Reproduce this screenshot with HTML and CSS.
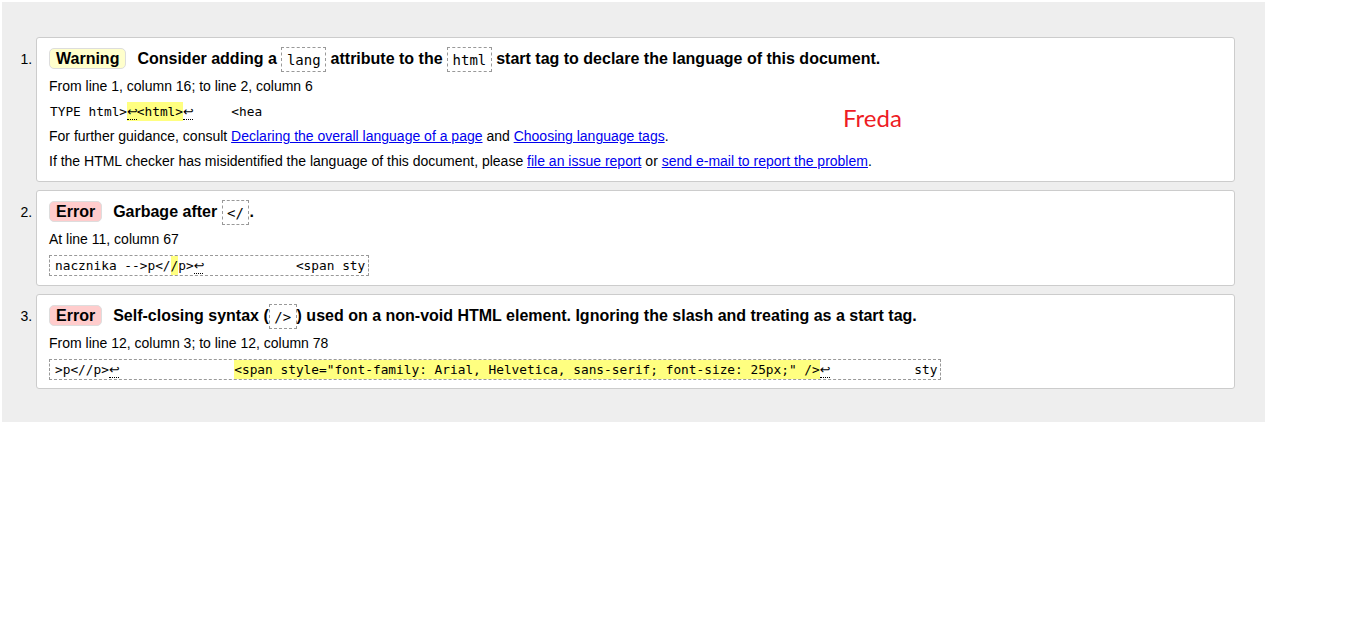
FILE: index.html
```html
<!DOCTYPE html>
<html lang="en">
<head>
<meta charset="utf-8">
<title>Validator messages</title>
<link rel="stylesheet" href="styles.css">
</head>
<body>
<div class="panel">
  <ol class="messages">
    <li class="card">
      <p class="title"><span class="badge badge-warning">Warning</span>Consider adding a <code>lang</code> attribute to the <code>html</code> start tag to declare the language of this document.</p>
      <p class="line">From line 1, column 16; to line 2, column 6</p>
      <p class="line extract"><span class="plain">TYPE html&gt;<mark><span class="lf">↩</span>&lt;html&gt;</mark><span class="lf">↩</span>     &lt;hea</span></p>
      <p class="line">For further guidance, consult <a href="#">Declaring the overall language of a page</a> and <a href="#">Choosing language tags</a>.</p>
      <p class="line">If the HTML checker has misidentified the language of this document, please <a href="#">file an issue report</a> or <a href="#">send e-mail to report the problem</a>.</p>
    </li>
    <li class="card">
      <p class="title"><span class="badge badge-error">Error</span>Garbage after <code>&lt;/</code>.</p>
      <p class="line">At line 11, column 67</p>
      <p class="line extract extract-boxed"><span class="box">nacznika --&gt;p&lt;/<mark>/</mark>p&gt;<span class="lf">↩</span>            &lt;span sty</span></p>
    </li>
    <li class="card">
      <p class="title"><span class="badge badge-error">Error</span>Self-closing syntax (<code>/&gt;</code>) used on a non-void HTML element. Ignoring the slash and treating as a start tag.</p>
      <p class="line">From line 12, column 3; to line 12, column 78</p>
      <p class="line extract extract-boxed"><span class="box">&gt;p&lt;//p&gt;<span class="lf">↩</span>               <mark>&lt;span style="font-family: Arial, Helvetica, sans-serif; font-size: 25px;" /&gt;</mark><span class="lf">↩</span>           sty</span></p>
    </li>
  </ol>
</div>
<div class="freda">Freda</div>
</body>
</html>
```

FILE: styles.css
```css
html, body {
  margin: 0;
  padding: 0;
  background: #fff;
}

body {
  font-family: "Liberation Sans", Arial, sans-serif;
  font-size: 14px;
  color: #000;
  position: relative;
}

.panel {
  margin: 2px 0 0 2px;
  width: 1263px;
  box-sizing: border-box;
  background: #eeeeee;
  padding: 35px 30px 33px 34px;
}

.messages {
  margin: 0;
  padding: 0;
  list-style: decimal outside;
}

.card {
  background: #fff;
  border: 1px solid #cccccc;
  border-radius: 3px;
  padding: 10px 12px 7px 12px;
  margin-bottom: 8px;
}

.card:last-child {
  margin-bottom: 0;
  padding-bottom: 6px;
}

.card::marker {
  font-family: "Liberation Sans", Arial, sans-serif;
  font-size: 14px;
  color: #000;
}

.title {
  margin: 0 0 5px 0;
  font-size: 16px;
  font-weight: bold;
  line-height: 21px;
}

.badge {
  display: inline-block;
  line-height: 19px;
  padding: 0 6px;
  border: 1px solid #dddddd;
  border-radius: 5px;
  margin-right: 11px;
}

.badge-warning {
  background: #ffffcc;
}

.badge-error {
  background: #ffcccc;
}

.title code {
  font-family: "DejaVu Sans Mono", monospace;
  font-size: 14px;
  font-weight: normal;
  line-height: 16px;
  border: 1px dashed #999999;
  padding: 3.5px 4.5px;
}

.line {
  margin: 0;
  line-height: 25px;
}

.line a {
  color: #0000ee;
}

.extract {
  font-family: "DejaVu Sans Mono", monospace;
  font-size: 12.8px;
  white-space: pre;
}

.extract-boxed {
  line-height: 26px;
}

.plain {
  padding-left: 1px;
}

.box {
  display: inline-block;
  line-height: 19px;
  border: 1px dashed #999999;
  padding: 0 3px 0 5px;
  vertical-align: middle;
}

mark {
  background: #ffff80;
  color: #000;
  padding: 2px 0;
}

.lf {
  font-family: "DejaVu Sans", sans-serif;
  border-bottom: 1px dotted #000;
  letter-spacing: -1px;
}

.freda {
  position: absolute;
  left: 843px;
  top: 106px;
  font-family: Lato, "Open Sans", sans-serif;
  font-size: 24px;
  line-height: 24px;
  color: #ee1c24;
}
```
